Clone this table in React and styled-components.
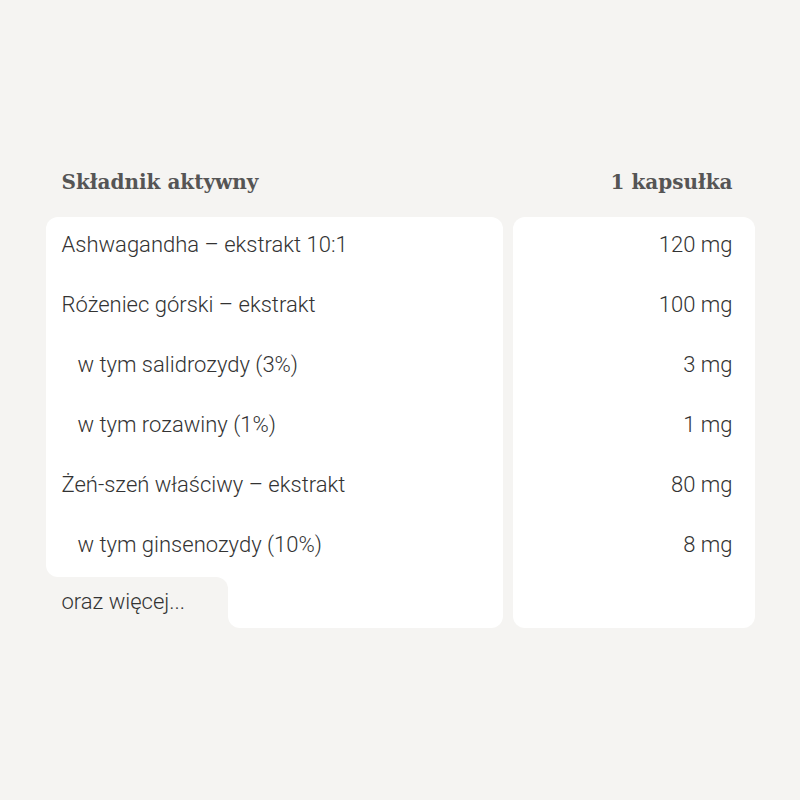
import React from "react";
import styled, { createGlobalStyle } from "styled-components";

const GlobalStyle = createGlobalStyle`
    body {
        margin: 0;
        background-color: #f5f4f2;
        font-family: Roboto, "Liberation Sans", sans-serif;
    }
`;

const Page = styled.div`
    width: 800px;
    height: 800px;
    padding-top: 158px;
    box-sizing: border-box;
    display: flex;
    justify-content: center;
    align-items: flex-start;
`;

const Table = styled.div`
    width: 709px;
    display: grid;
    grid-template-columns: 457px 242px;
    grid-template-rows: 59px auto;
    column-gap: 10px;
`;

const HeadCell = styled.div`
    display: flex;
    align-items: center;
    justify-content: ${(p) => (p.$right ? "flex-end" : "flex-start")};
    padding: 0 ${(p) => (p.$right ? "22px" : "16px")};
    padding-bottom: 11px;
    font-family: "DejaVu Serif", "Liberation Serif", serif;
    font-weight: bold;
    font-size: 20px;
    color: #555555;
`;

const Column = styled.div`
    display: flex;
    flex-direction: column;
`;

const Card = styled.div`
    background-color: white;
    border-radius: ${(p) => p.$radius || "12px"};
    display: flex;
    flex-direction: column;
    height: ${(p) => p.$height || "auto"};
`;

const Row = styled.div`
    height: 60px;
    display: flex;
    align-items: center;
    justify-content: ${(p) => (p.$right ? "flex-end" : "flex-start")};
    padding: 0 ${(p) => (p.$right ? "22px" : "16px")};
    padding-left: ${(p) => (p.$sub ? "32px" : p.$right ? "0" : "16px")};
    padding-bottom: 6px;
    box-sizing: border-box;
    font-size: 22px;
    font-weight: 300;
    color: #333333;
`;

const BottomRow = styled.div`
    display: flex;
    height: 51px;
    background: linear-gradient(white, white) top / 100% 12px no-repeat;
`;

const MoreCell = styled.div`
    width: 182px;
    background-color: #f5f4f2;
    border-top-right-radius: 12px;
    display: flex;
    align-items: center;
    padding-left: 16px;
    padding-bottom: 2px;
    box-sizing: border-box;
    font-size: 22px;
    font-weight: 300;
    color: #333333;
`;

const Filler = styled.div`
    flex: 1;
    background-color: white;
    border-radius: 0 0 12px 12px;
`;

const rows = [
    { name: "Ashwagandha – ekstrakt 10:1", value: "120 mg" },
    { name: "Różeniec górski – ekstrakt", value: "100 mg" },
    { name: "w tym salidrozydy (3%)", value: "3 mg", sub: true },
    { name: "w tym rozawiny (1%)", value: "1 mg", sub: true },
    { name: "Żeń-szeń właściwy – ekstrakt", value: "80 mg" },
    { name: "w tym ginsenozydy (10%)", value: "8 mg", sub: true },
];

const App = () => {
    return (
        <Page>
            <GlobalStyle />
            <Table>
                <HeadCell>Składnik aktywny</HeadCell>
                <HeadCell $right>1 kapsułka</HeadCell>
                <Column>
                    <Card $radius="12px 12px 0 12px">
                        {rows.map((r) => (
                            <Row key={r.name} $sub={r.sub}>
                                {r.name}
                            </Row>
                        ))}
                    </Card>
                    <BottomRow>
                        <MoreCell>oraz więcej...</MoreCell>
                        <Filler />
                    </BottomRow>
                </Column>
                <Card $height="411px">
                    {rows.map((r) => (
                        <Row key={r.name} $right>
                            {r.value}
                        </Row>
                    ))}
                </Card>
            </Table>
        </Page>
    );
};

export default App;
